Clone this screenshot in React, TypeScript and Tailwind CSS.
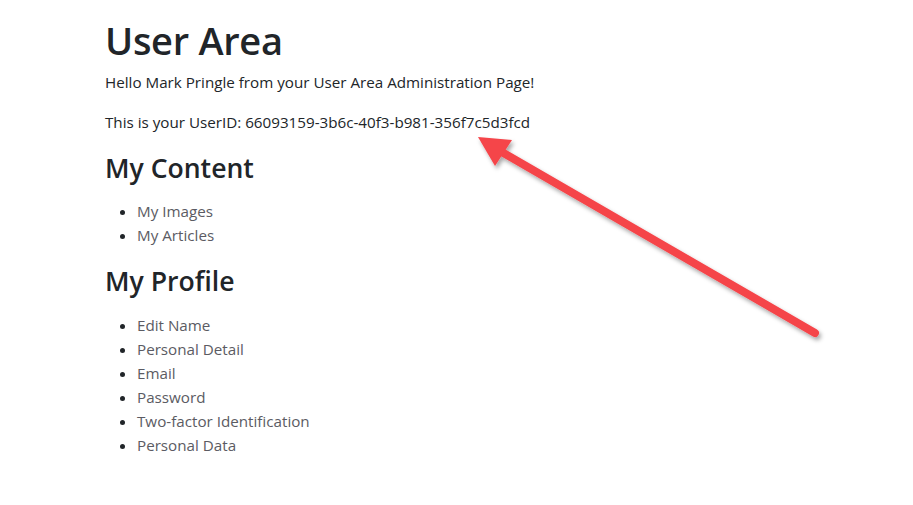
import React from "react";

export default function App() {
  const content = ["My Images", "My Articles"];
  const profile = [
    "Edit Name",
    "Personal Detail",
    "Email",
    "Password",
    "Two-factor Identification",
    "Personal Data",
  ];
  return (
    <div
      className="relative w-[913px] h-[505px] bg-white overflow-hidden text-[#212529]"
      style={{ fontFamily: '"Segoe UI", "Open Sans", sans-serif' }}
    >
      <div className="pl-[105px] pt-[16px]">
        <h1 className="text-[38px] leading-[48px] font-semibold tracking-[-0.3px]">User Area</h1>
        <p className="mt-[7px] text-[15.2px] leading-[22px]">
          Hello Mark Pringle from your User Area Administration Page!
        </p>
        <p className="mt-[18px] text-[15.2px] leading-[22px]">
          This is your UserID: 66093159-3b6c-40f3-b981-356f7c5d3fcd
        </p>
        <h2 className="mt-[18px] text-[26.6px] leading-[34px] font-semibold">My Content</h2>
        <ul className="mt-[14px] list-disc pl-[32px] text-[15.2px] leading-[24px] text-[#5b5b63]">
          {content.map((t) => (
            <li key={t} className="marker:text-[#212529]">{t}</li>
          ))}
        </ul>
        <h2 className="mt-[17px] text-[26.6px] leading-[34px] font-semibold">My Profile</h2>
        <ul className="mt-[15px] list-disc pl-[32px] text-[15.2px] leading-[24px] text-[#5b5b63]">
          {profile.map((t) => (
            <li key={t} className="marker:text-[#212529]">{t}</li>
          ))}
        </ul>
      </div>
      <svg
        className="absolute left-0 top-0 pointer-events-none"
        width="913"
        height="505"
        viewBox="0 0 913 505"
      >
        <defs>
          <filter id="sh" x="-20%" y="-20%" width="140%" height="140%">
            <feDropShadow dx="2" dy="3" stdDeviation="2" floodColor="#000" floodOpacity="0.35" />
          </filter>
        </defs>
        <g filter="url(#sh)">
          <line x1="815" y1="333" x2="500" y2="151" stroke="#f54449" strokeWidth="8" strokeLinecap="round" />
          <polygon points="478,137 512,140 495,166" fill="#f54449" />
        </g>
      </svg>
    </div>
  );
}
